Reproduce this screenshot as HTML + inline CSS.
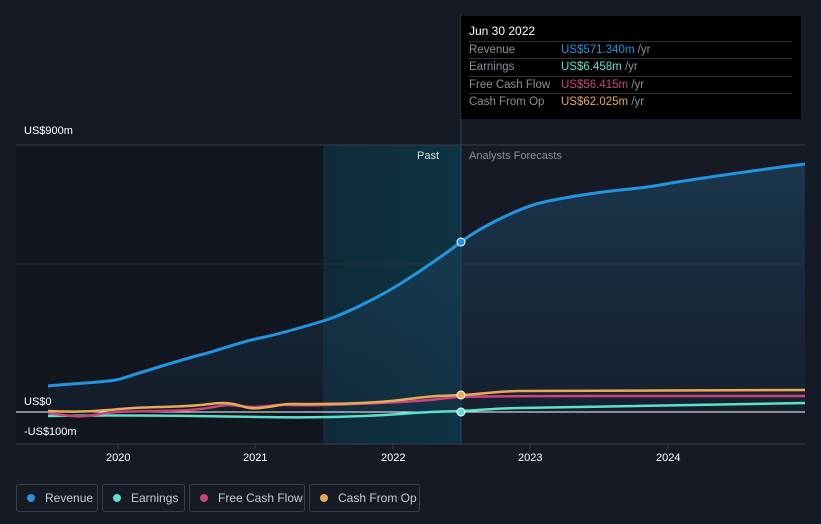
<!DOCTYPE html>
<html><head><meta charset="utf-8"><style>
body{margin:0;background:#151a24;font-family:"Liberation Sans",sans-serif;}
.wrap{position:relative;width:821px;height:524px;overflow:hidden;background:#151a24}
.t{position:absolute;font-size:11px;color:#fff}
.tip{position:absolute;left:461px;top:16px;width:340px;height:103px;background:#000;}
.tip .r{position:absolute;left:8px;font-size:11.5px;color:#8a8f98;width:323px;border-top:1px solid #333;height:17px;line-height:17px}
.tip .r span{position:absolute;left:92px}
.leg{position:absolute;top:484px;height:28px;border:1px solid #3a3f4a;border-radius:3px;font-size:12px;color:#c8ccd2;line-height:26px;box-sizing:border-box}
.leg i{position:absolute;left:10px;top:9px;width:8px;height:8px;border-radius:50%}
</style></head><body><div class="wrap">
<svg width="821" height="524" style="position:absolute;left:0;top:0">
<defs>
<linearGradient id="pg" x1="0" x2="1"><stop offset="0" stop-color="#0f2a38"/><stop offset="1" stop-color="#0d3444"/></linearGradient>
<linearGradient id="rf" x1="0" y1="0" x2="0" y2="1"><stop offset="0" stop-color="#1d4a6a" stop-opacity=".6"/><stop offset="1" stop-color="#1a2f44" stop-opacity=".3"/></linearGradient>
</defs>
<rect x="16" y="145" width="307" height="299" fill="#12161e"/>
<rect x="323" y="145" width="138" height="299" fill="url(#pg)"/>
<line x1="461" y1="15" x2="461" y2="444" stroke="#2a4a5a" stroke-width="1"/>
<line x1="16" y1="145" x2="805" y2="145" stroke="#3a3f4a"/>
<line x1="16" y1="264" x2="805" y2="264" stroke="#2a2f3a"/>
<path d="M48,386 C80,383 110,382 120,379 S180,360 200,355 S240,342 260,338 S300,328 323,321 S380,296 395,287 S440,258 461,242 S520,208 540,203 S600,192 620,190 S650,187 660,185 S740,172 805,164 L805,412 L48,412Z" fill="url(#rf)"/>
<path d="M48,386 C80,383 110,382 120,379 S180,360 200,355 S240,342 260,338 S300,328 323,321 S380,296 395,287 S440,258 461,242 S520,208 540,203 S600,192 620,190 S650,187 660,185 S740,172 805,164" fill="none" stroke="#2394df" stroke-width="3"/>
<line x1="16" y1="412" x2="805" y2="412" stroke="#fff" stroke-width="1"/>
<line x1="16" y1="444" x2="805" y2="444" stroke="#3a3f4a"/>
<path d="M48,416 C100,415 200,416 260,417 S360,417 400,414 S440,412 461,411 S500,408 520,408 S600,406 805,403" fill="none" stroke="#5ee0cf" stroke-width="2.5"/>
<path d="M48,413 C70,416 80,418 100,414 S160,412 190,410 S220,403 240,406 S270,404 290,405 S360,404 400,402 S440,398 461,397 S520,396 600,396 S805,396 805,396" fill="none" stroke="#c8457f" stroke-width="2.5"/>
<path d="M48,411 C70,412 90,412 120,409 S180,408 210,404 S240,410 260,408 S280,404 290,404 S360,405 400,400 S440,396 461,395 S500,391 520,391 S600,390 805,390" fill="none" stroke="#e8aa58" stroke-width="2.5"/>
<circle cx="461" cy="242" r="4" fill="#2394df" stroke="#fff"/>
<circle cx="461" cy="395" r="4" fill="#e8aa58" stroke="#fff"/>
<circle cx="461" cy="412" r="4" fill="#5ee0cf" stroke="#fff"/>
<g stroke="#3a3f4a"><line x1="118" y1="444" x2="118" y2="449"/><line x1="255" y1="444" x2="255" y2="449"/><line x1="393" y1="444" x2="393" y2="449"/><line x1="530" y1="444" x2="530" y2="449"/><line x1="668" y1="444" x2="668" y2="449"/></g>
</svg>
<div class="t" style="left:24px;top:125px">US$900m</div>
<div class="t" style="left:24px;top:396px">US$0</div>
<div class="t" style="left:24px;top:426px">-US$100m</div>
<div class="t" style="left:417px;top:150px;color:#ddd">Past</div>
<div class="t" style="left:469px;top:150px;color:#8a8f98">Analysts Forecasts</div>
<div class="t" style="left:106px;top:452px">2020</div>
<div class="t" style="left:243px;top:452px">2021</div>
<div class="t" style="left:381px;top:452px">2022</div>
<div class="t" style="left:518px;top:452px">2023</div>
<div class="t" style="left:656px;top:452px">2024</div>
<div class="tip">
<div style="position:absolute;left:8px;top:8px;font-size:12px;color:#fff">Jun 30 2022</div>
<div class="r" style="top:25px">Revenue<span style="color:#2394df">US$571.340m <b style="font-weight:normal;color:#8a8f98">/yr</b></span></div>
<div class="r" style="top:42px">Earnings<span style="color:#5ee0cf">US$6.458m <b style="font-weight:normal;color:#8a8f98">/yr</b></span></div>
<div class="r" style="top:60px">Free Cash Flow<span style="color:#c8457f">US$56.415m <b style="font-weight:normal;color:#8a8f98">/yr</b></span></div>
<div class="r" style="top:77px">Cash From Op<span style="color:#e8aa58">US$62.025m <b style="font-weight:normal;color:#8a8f98">/yr</b></span></div>
</div>
<div class="leg" style="left:16px;width:82px;padding-left:28px"><i style="background:#2394df"></i>Revenue</div>
<div class="leg" style="left:102px;width:83px;padding-left:28px"><i style="background:#5ee0cf"></i>Earnings</div>
<div class="leg" style="left:189px;width:116px;padding-left:28px"><i style="background:#c8457f"></i>Free Cash Flow</div>
<div class="leg" style="left:309px;width:111px;padding-left:28px"><i style="background:#e8aa58"></i>Cash From Op</div>
</div></body></html>
